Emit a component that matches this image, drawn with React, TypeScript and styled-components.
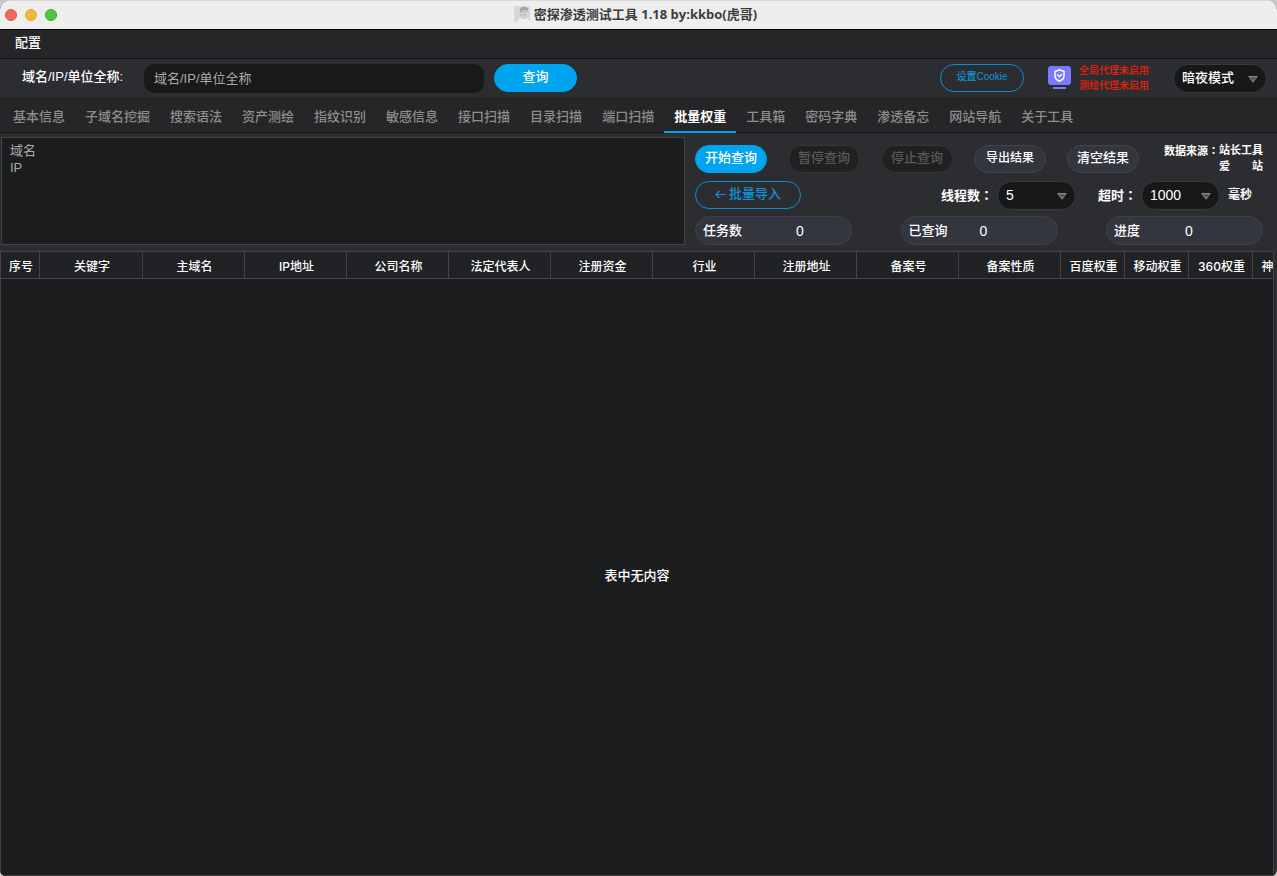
import React from 'react';
import styled, { createGlobalStyle, css } from 'styled-components';

const Global = createGlobalStyle`
  * { box-sizing: border-box; }
  html, body, #root { height: 100%; }
  body {
    margin: 0;
    background: #c9c9c9;
    color: #fff;
    font-family: "Liberation Sans", "Noto Sans CJK SC", sans-serif;
    font-size: 13px;
    line-height: 18px;
  }
  button, input, select, textarea { font: inherit; color: inherit; margin: 0; }
`;

const Window = styled.div`
  display: flex;
  flex-direction: column;
  min-height: 100%;
  overflow: hidden;
  border-radius: 10px 10px 6px 6px;
  background: #2c2d31;
`;

const TitleBar = styled.header`
  position: relative;
  display: flex;
  align-items: center;
  justify-content: center;
  height: 30px;
  padding: 0 6px 2px 0;
  background: #eeeeee;
  border-top: 1px solid #dadada;
  border-bottom: 1px solid #000;
  color: #3c3c3c;
`;

const Lights = styled.div`
  position: absolute;
  left: 5px;
  top: 8px;
  display: flex;
  gap: 8px;
`;

const Light = styled.button<{ $fill: string; $edge: string }>`
  width: 12px;
  height: 12px;
  padding: 0;
  border-radius: 50%;
  border: 1px solid ${(p) => p.$edge};
  background: ${(p) => p.$fill};
`;

const Title = styled.h1`
  display: flex;
  align-items: center;
  gap: 4px;
  margin: 0;
  font-family: "Open Sans", "Noto Sans CJK SC", sans-serif;
  font-size: 13px;
  line-height: 18px;
  font-weight: 700;
`;

const MenuBar = styled.nav`
  display: flex;
  align-items: center;
  height: 29px;
  padding: 0 15px 2px;
  background: #262628;
  border-bottom: 1px solid #121213;
`;

const MenuItem = styled.button`
  padding: 0;
  border: 0;
  background: none;
  font-weight: 500;
`;

const SearchBar = styled.form`
  display: flex;
  align-items: center;
  height: 38px;
  padding: 0 10px 0 22px;
`;

const SearchLabel = styled.label`
  width: 122px;
  padding-bottom: 2px;
  font-weight: 500;
`;

const SearchInput = styled.input`
  width: 340px;
  height: 29px;
  margin-right: 10px;
  padding: 0 10px;
  border: 0;
  border-radius: 10px;
  background: #191919;
  &::placeholder { color: #a9a9a9; opacity: 1; }
`;

const Spacer = styled.div`
  flex: 1;
`;

type Tone = 'primary' | 'outline' | 'neutral' | 'off';

const tones = {
  primary: css`
    background: #00a4ef;
    border-color: #00a4ef;
  `,
  outline: css`
    background: transparent;
    border-color: #0b8fd0;
    color: #0f93d6;
  `,
  neutral: css`
    background: #34363f;
    border-color: #434448;
  `,
  off: css`
    background: #202020;
    border-color: #353537;
    color: #5a5a5a;
  `,
};

const Pill = styled.button<{ $tone: Tone; $width: number; $size?: number }>`
  display: flex;
  align-items: center;
  justify-content: center;
  gap: 3px;
  flex: none;
  width: ${(p) => p.$width}px;
  height: 28px;
  padding: 0 0 2px;
  border: 1px solid;
  border-radius: 14px;
  font-size: ${(p) => p.$size ?? 13}px;
  font-weight: 500;
  white-space: nowrap;
  ${(p) => tones[p.$tone]}
`;

const ProxyStatus = styled.div`
  display: flex;
  align-items: center;
  gap: 7px;
  margin: 0 24px;
  color: #e8200c;
  font-size: 10px;
  line-height: 15px;
  font-weight: 500;
  white-space: nowrap;
`;

const SelectBox = styled.span<{ $width: number }>`
  display: grid;
  align-items: center;
  width: ${(p) => p.$width}px;
  height: 29px;
  border: 1px solid #3a3a3c;
  border-radius: 15px;
  background: #181818;
  > * { grid-area: 1 / 1; }
  svg { justify-self: end; margin: 2px 8px 0 0; pointer-events: none; }
`;

const Select = styled.select<{ $numeric?: boolean }>`
  appearance: none;
  width: 100%;
  height: 27px;
  padding: 0 8px;
  border: 0;
  background: none;
  font-size: ${(p) => (p.$numeric ? 14 : 13)}px;
  font-weight: ${(p) => (p.$numeric ? 400 : 500)};
`;

const Tabs = styled.div`
  display: flex;
  height: 36px;
  padding: 0 3px;
  background: #262628;
  border-bottom: 1px solid #121213;
`;

const Tab = styled.button<{ $active: boolean }>`
  height: 36px;
  padding: 5px 10px 0;
  border: 0;
  border-bottom: 2px solid ${(p) => (p.$active ? '#00a4ef' : 'transparent')};
  background: none;
  color: ${(p) => (p.$active ? '#fff' : '#8d8d8d')};
  font-weight: ${(p) => (p.$active ? 700 : 500)};
  white-space: nowrap;
`;

const Controls = styled.section`
  display: flex;
  height: 118px;
  padding: 4px 0 6px 1px;
`;

const Targets = styled.textarea`
  flex: 1;
  min-width: 0;
  padding: 4px 8px;
  border: 1px solid #434345;
  background: #1c1d1e;
  line-height: 17px;
  resize: none;
  &::placeholder { color: #a9a9a9; opacity: 1; }
`;

const Panel = styled.div`
  display: flex;
  flex-direction: column;
  justify-content: space-between;
  flex: none;
  width: 592px;
  padding: 6px 14px 0 10px;
`;

const Row = styled.div`
  display: flex;
  align-items: center;
  justify-content: space-between;
`;

const Actions = styled.div`
  display: flex;
  gap: 21px;
`;

const Source = styled.p`
  display: grid;
  grid-template-columns: auto 44px;
  margin: 0;
  font-size: 11px;
  line-height: 15px;
  font-weight: 700;
  white-space: nowrap;
`;

const SourceLast = styled.span`
  grid-column: 2;
  display: flex;
  justify-content: space-between;
`;

const Colon = styled.span`
  font-family: "Noto Sans CJK TC", sans-serif;
`;

const Field = styled.label`
  display: flex;
  align-items: center;
  gap: 4px;
  font-weight: 700;
  white-space: nowrap;
`;

const Unit = styled.span`
  margin-left: 4px;
  font-size: 12px;
`;

const FieldGroup = styled.div`
  display: flex;
  gap: 22px;
  padding-right: 11px;
`;

const Stat = styled.div`
  display: flex;
  align-items: center;
  width: 157px;
  height: 29px;
  padding: 0 7px;
  border: 1px solid #414246;
  border-radius: 15px;
  background: #34363f;
  font-weight: 500;
`;

const StatName = styled.span<{ $width: number }>`
  width: ${(p) => p.$width}px;
`;

const StatValue = styled.output`
  width: 46px;
  text-align: center;
  font-size: 14px;
  font-weight: 400;
`;

const Results = styled.section`
  display: flex;
  flex-direction: column;
  flex: 1;
  margin-right: 3px;
  border: 1px solid #434345;
  background: #1c1d1e;
  overflow: hidden;
`;

const Table = styled.table`
  width: 1315px;
  table-layout: fixed;
  border-collapse: separate;
  border-spacing: 0;
`;

const Th = styled.th<{ $width: number }>`
  width: ${(p) => p.$width}px;
  height: 27px;
  padding: 3px 0 0 2px;
  border-right: 1px solid #434345;
  border-bottom: 1px solid #434345;
  background: #212225;
  font-family: Inter, "Noto Sans CJK SC", sans-serif;
  font-size: 12px;
  line-height: 18px;
  font-weight: 500;
  white-space: nowrap;
`;

const Empty = styled.p`
  display: flex;
  flex: 1;
  align-items: center;
  justify-content: center;
  margin: 0;
  padding-bottom: 2px;
  font-weight: 500;
`;

const Avatar = () => (
  <svg width="16" height="16" viewBox="0 0 16 16" aria-hidden="true">
    <rect width="16" height="16" fill="#d3dad9" />
    <path d="M4 16c0-3 2-4 4-5l3 1c3 0 4 2 5 4z" fill="#f0f0f0" />
    <path d="M7 4h6v4c0 2-1 3-2.500 3S7 9 7 7z" fill="#d0d0d0" />
    <path d="M6 6c-1-3 1-5 4-5s5 1 4 4l-1 0-1-1H8L7 7z" fill="#a0a4a3" />
    <path d="M8 5.500h1.500M11 5.500h1.500M9.500 8.800h2" stroke="#999" strokeWidth=".8" fill="none" />
    <path d="M7 8v3l3 2 1-2" stroke="#b2b4b4" strokeWidth=".8" fill="none" />
  </svg>
);

const Shield = () => (
  <svg width="24" height="24" viewBox="0 0 24 24" fill="none" aria-hidden="true">
    <rect x="0" y="0" width="23" height="19" rx="3" fill="#7b79ff" />
    <rect x="5" y="21" width="13" height="2" fill="#7b79ff" />
    <path d="M11.500 3.700 16 5.500v4.500c0 2.500-2 4.200-4.500 5.200C9 14.200 7 12.500 7 10V5.500z" stroke="#fff" strokeWidth="1.500" />
    <path d="m9 8.500 2.300 2.300L14 8" stroke="#fff" strokeWidth="1.500" />
  </svg>
);

const Caret = () => (
  <svg width="10" height="7" viewBox="0 0 10 7" aria-hidden="true">
    <path d="M.8.5h8.400L5 6.200z" fill="#585858" stroke="#8c8c8c" />
  </svg>
);

const Arrow = () => (
  <svg width="11" height="9" viewBox="0 0 11 9" fill="none" stroke="currentColor" strokeWidth="1.200" aria-hidden="true">
    <path d="M10.500 4.500H1M4.500 1 1 4.500 4.500 8" />
  </svg>
);

const tabs = ['基本信息', '子域名挖掘', '搜索语法', '资产测绘', '指纹识别', '敏感信息', '接口扫描', '目录扫描', '端口扫描', '批量权重', '工具箱', '密码字典', '渗透备忘', '网站导航', '关于工具'];

const columns: [string, number][] = [
  ['序号', 39], ['关键字', 103], ['主域名', 102], ['IP地址', 102], ['公司名称', 102],
  ['法定代表人', 102], ['注册资金', 102], ['行业', 102], ['注册地址', 102], ['备案号', 102],
  ['备案性质', 102], ['百度权重', 64], ['移动权重', 64], ['360权重', 64], ['神马权重', 64],
];

const stats = [
  { name: '任务数', value: 0, nameWidth: 74 },
  { name: '已查询', value: 0, nameWidth: 52 },
  { name: '进度', value: 0, nameWidth: 52 },
];

export default function App() {
  return (
    <>
      <Global />
      <Window>
        <TitleBar>
          <Lights>
            <Light aria-label="关闭" $fill="#ed6a5e" $edge="#d8554a" />
            <Light aria-label="最小化" $fill="#f0b93c" $edge="#d9a33a" />
            <Light aria-label="最大化" $fill="#4cc73e" $edge="#37a92d" />
          </Lights>
          <Title><Avatar />密探渗透测试工具 1.18 by:kkbo(虎哥)</Title>
        </TitleBar>
        <MenuBar><MenuItem>配置</MenuItem></MenuBar>
        <SearchBar onSubmit={(e) => e.preventDefault()}>
          <SearchLabel htmlFor="query">域名/IP/单位全称:</SearchLabel>
          <SearchInput id="query" placeholder="域名/IP/单位全称" />
          <Pill $tone="primary" $width={83}>查询</Pill>
          <Spacer />
          <Pill type="button" $tone="outline" $width={84} $size={10}>设置Cookie</Pill>
          <ProxyStatus>
            <Shield />
            <div>
              <div>全局代理未启用</div>
              <div>测绘代理未启用</div>
            </div>
          </ProxyStatus>
          <SelectBox $width={94}>
            <Select aria-label="主题" defaultValue="暗夜模式"><option>暗夜模式</option></Select>
            <Caret />
          </SelectBox>
        </SearchBar>
        <Tabs role="tablist">
          {tabs.map((t) => (
            <Tab key={t} role="tab" aria-selected={t === '批量权重'} $active={t === '批量权重'}>{t}</Tab>
          ))}
        </Tabs>
        <Controls>
          <Targets aria-label="查询目标" placeholder={'域名\nIP'} />
          <Panel>
            <Row>
              <Actions>
                <Pill $tone="primary" $width={72}>开始查询</Pill>
                <Pill $tone="off" $width={72} disabled>暂停查询</Pill>
                <Pill $tone="off" $width={72} disabled>停止查询</Pill>
                <Pill $tone="neutral" $width={72} $size={12}>导出结果</Pill>
                <Pill $tone="neutral" $width={72}>清空结果</Pill>
              </Actions>
              <Source>
                <span>数据来源<Colon>：</Colon></span>
                <span>站长工具</span>
                <SourceLast><span>爱</span><span>站</span></SourceLast>
              </Source>
            </Row>
            <Row>
              <Pill $tone="outline" $width={106}><Arrow />批量导入</Pill>
              <FieldGroup>
                <Field>
                  <span>线程数<Colon>：</Colon></span>
                  <SelectBox $width={79}>
                    <Select $numeric defaultValue="5"><option>5</option></Select>
                    <Caret />
                  </SelectBox>
                </Field>
                <Field>
                  <span>超时<Colon>：</Colon></span>
                  <SelectBox $width={79}>
                    <Select $numeric defaultValue="1000"><option>1000</option></Select>
                    <Caret />
                  </SelectBox>
                  <Unit>毫秒</Unit>
                </Field>
              </FieldGroup>
            </Row>
            <Row>
              {stats.map(({ name, value, nameWidth }) => (
                <Stat key={name}>
                  <StatName $width={nameWidth}>{name}</StatName>
                  <StatValue>{value}</StatValue>
                </Stat>
              ))}
            </Row>
          </Panel>
        </Controls>
        <Results>
          <Table>
            <thead>
              <tr>{columns.map(([name, width]) => <Th key={name} $width={width}>{name}</Th>)}</tr>
            </thead>
          </Table>
          <Empty>表中无内容</Empty>
        </Results>
      </Window>
    </>
  );
}
